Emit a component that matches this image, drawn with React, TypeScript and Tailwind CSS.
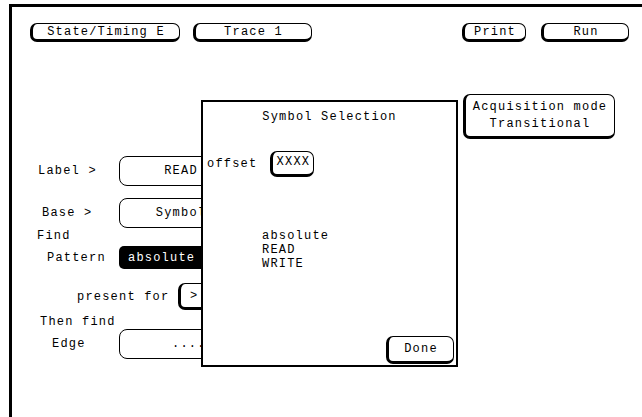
import type { ReactNode } from 'react';

// raised softkey: thick left edge and bottom shadow
function Key({ children, className = '' }: { children: ReactNode; className?: string }) {
  return (
    <div className={`flex items-center justify-center rounded-[7px] border border-b-[3px] border-l-[3px] border-black bg-white ${className}`}>
      {children}
    </div>
  );
}

// flat field box
function Field({ children, className = '' }: { children: ReactNode; className?: string }) {
  return (
    <div className={`flex h-full w-[124px] items-center rounded-[8px] border border-black ${className}`}>
      {children}
    </div>
  );
}

export default function App() {
  return (
    <div className="relative h-[417px] w-[642px] overflow-hidden bg-white pl-[9px] pt-[4px] font-['Liberation_Mono',monospace] text-[12px] tracking-[1.2px] text-black">
      <div className="flex h-full flex-col border-l-[3px] border-t-[3px] border-black">
        {/* softkey bar */}
        <div className="mt-[16px] flex h-[19px] pl-[18px] pr-[13px]">
          <Key className="w-[150px]">State/Timing E</Key>
          <Key className="ml-[13px] w-[119px]">Trace 1</Key>
          <Key className="ml-auto w-[64px]">Print</Key>
          <Key className="ml-[15px] w-[88px]">Run</Key>
        </div>

        <Key className="mr-[27px] mt-[52px] h-[45px] w-[152px] flex-col self-end leading-[17px]">
          <div>Acquisition mode</div>
          <div>Transitional</div>
        </Key>

        <div className="mt-[17px] flex h-[30px] items-center">
          <div className="w-[107px] pl-[26px]">Label &gt;</div>
          <Field className="justify-center">READ</Field>
        </div>

        <div className="mt-[12px] flex h-[30px] items-center">
          <div className="w-[107px] pl-[30px]">Base &gt;</div>
          <Field className="justify-center">Symbol</Field>
        </div>

        <div className="mt-[1px] h-[14px] pl-[25px] leading-[14px]">Find</div>

        <div className="mt-[3px] flex h-[23px] items-center">
          <div className="w-[107px] pl-[35px]">Pattern</div>
          <div className="flex h-full w-[124px] items-center rounded-[5px] bg-black pl-[9px] text-white">absolute</div>
        </div>

        <div className="mt-[14px] flex h-[27px] items-center">
          <div className="w-[166px] pl-[65px]">present for</div>
          <Key className="h-full w-[40px] justify-start pl-[9px]">&gt;</Key>
        </div>

        <div className="mt-[6px] h-[13px] pl-[28px] leading-[13px]">Then find</div>

        <div className="flex h-[30px] items-center">
          <div className="w-[107px] pl-[40px]">Edge</div>
          <Field className="pl-[52px]">........</Field>
        </div>
      </div>

      {/* Symbol Selection dialog */}
      <div className="absolute left-[201px] top-[100px] flex h-[267px] w-[257px] flex-col border-2 border-black bg-white">
        <div className="mt-[8px] h-[14px] text-center leading-[14px]">Symbol Selection</div>
        <div className="mt-[27px] flex h-[26px] items-center pl-[4px]">
          <span>offset</span>
          <Key className="ml-[13px] h-full w-[44px] pb-[2px]">XXXX</Key>
        </div>
        <div className="mt-[52px] pl-[59px] leading-[14px]">
          <div>absolute</div>
          <div>READ</div>
          <div>WRITE</div>
        </div>
        <Key className="mb-[1px] mr-[2px] mt-auto h-[28px] w-[68px] self-end">Done</Key>
      </div>
    </div>
  );
}
